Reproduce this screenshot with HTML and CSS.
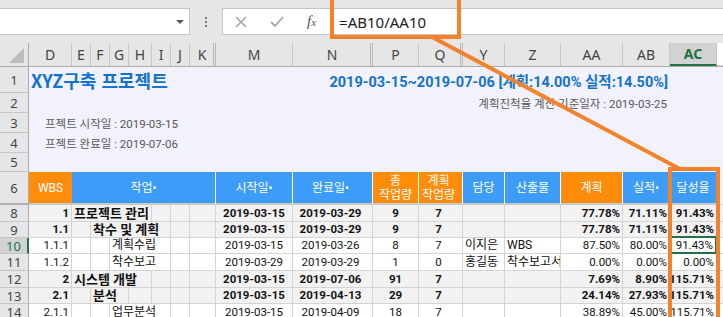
FILE: index.html
```html
<!DOCTYPE html>
<html lang="ko">
<head>
    <meta charset="UTF-8">
    <title>XYZ구축 프로젝트</title>
    <link rel="stylesheet" href="styles.css">
</head>
<body>
    <!-- formula bar -->
    <div class="fbar">
        <div class="namebox"><span class="caret"></span></div>
        <div class="grip"><i></i><i></i><i></i></div>
        <div class="formula">
            <svg class="fbtn" width="14" height="14" viewBox="0 0 14 14"><path d="M2 2 L12 12 M12 2 L2 12" stroke="#a6a6a6" stroke-width="1.6" fill="none"/></svg>
            <svg class="fbtn" width="16" height="14" viewBox="0 0 16 14"><path d="M2 7 L6 11 L14 2" stroke="#a6a6a6" stroke-width="1.8" fill="none"/></svg>
            <span class="fx">f<sub>x</sub></span>
            <span class="ftext">=AB10/AA10</span>
        </div>
    </div>

    <div class="sheet">
        <div class="row colhdr">
            <div class="corner"><span class="tri"></span></div>
            <div>D</div><div>E</div><div>F</div><div>G</div><div>H</div><div>I</div><div>J</div>
            <div class="hid">K</div><div>M</div><div class="hid">N</div><div>P</div><div class="hid">Q</div>
            <div>Y</div><div>Z</div><div>AA</div><div>AB</div><div class="sel">AC</div><div class="rest"></div>
        </div>

        <div class="row band r1">
            <div class="rh">1</div>
            <div class="band-cell">
                <span class="title">XYZ구축 프로젝트</span>
                <span class="period">2019-03-15~2019-07-06 [계획:14.00% 실적:14.50%]</span>
            </div>
        </div>
        <div class="row band r2">
            <div class="rh">2</div>
            <div class="band-cell right"><span class="note">계획진척율 계산 기준일자 : 2019-03-25</span></div>
        </div>
        <div class="row band r3">
            <div class="rh">3</div>
            <div class="band-cell"><span class="info">프젝트 시작일 : 2019-03-15</span></div>
        </div>
        <div class="row band r4">
            <div class="rh">4</div>
            <div class="band-cell"><span class="info">프젝트 완료일 : 2019-07-06</span></div>
        </div>
        <div class="row band r5">
            <div class="rh">5</div>
            <div class="band-cell"></div>
        </div>

        <div class="row thead">
            <div class="rh">6</div>
            <div class="th or wbs">WBS</div>
            <div class="th bl task">작업•</div>
            <div class="th bl">시작일•</div>
            <div class="th bl pad-n">완료일•</div>
            <div class="th or">총<br>작업량</div>
            <div class="th or pad-q">계획<br>작업량</div>
            <div class="th bl">담당</div>
            <div class="th bl">산출물</div>
            <div class="th or">계획</div>
            <div class="th bl">실적•</div>
            <div class="th bl">달성율</div>
            <div class="th rest"></div>
        </div>

        <div class="row data sum r8">
            <div class="rh">8</div>
            <div class="c num">1</div>
            <div class="c txt s4">프로젝트 관리</div>
            <div class="c"></div><div class="c"></div><div class="c"></div>
            <div class="c mid">2019-03-15</div><div class="c mid pad-n">2019-03-29</div>
            <div class="c mid">9</div><div class="c mid pad-q">7</div>
            <div class="c"></div><div class="c"></div>
            <div class="c num">77.78%</div><div class="c num">71.11%</div><div class="c num">91.43%</div>
            <div class="rest"></div>
        </div>
        <div class="row data sum r9">
            <div class="rh">9</div>
            <div class="c num">1.1</div>
            <div class="c"></div>
            <div class="c txt s4">착수 및 계획</div>
            <div class="c"></div><div class="c"></div>
            <div class="c mid">2019-03-15</div><div class="c mid pad-n">2019-03-29</div>
            <div class="c mid">9</div><div class="c mid pad-q">7</div>
            <div class="c"></div><div class="c"></div>
            <div class="c num">77.78%</div><div class="c num">71.11%</div><div class="c num active-top">91.43%</div>
            <div class="rest"></div>
        </div>
        <div class="row data r10">
            <div class="rh on">10</div>
            <div class="c num">1.1.1</div>
            <div class="c"></div><div class="c"></div>
            <div class="c txt s3">계획수립</div>
            <div class="c"></div><div class="c"></div>
            <div class="c mid">2019-03-15</div><div class="c mid pad-n">2019-03-26</div>
            <div class="c mid">8</div><div class="c mid pad-q">7</div>
            <div class="c txt">이지은</div><div class="c txt">WBS</div>
            <div class="c num">87.50%</div><div class="c num">80.00%</div><div class="c num active">91.43%</div>
            <div class="rest"></div>
        </div>
        <div class="row data r11">
            <div class="rh">11</div>
            <div class="c num">1.1.2</div>
            <div class="c"></div><div class="c"></div>
            <div class="c txt s3">착수보고</div>
            <div class="c"></div><div class="c"></div>
            <div class="c mid">2019-03-29</div><div class="c mid pad-n">2019-03-29</div>
            <div class="c mid">1</div><div class="c mid pad-q">0</div>
            <div class="c txt">홍길동</div><div class="c txt clip">착수보고서</div>
            <div class="c num">0.00%</div><div class="c num">0.00%</div><div class="c num">0.00%</div>
            <div class="rest"></div>
        </div>
        <div class="row data sum r12">
            <div class="rh">12</div>
            <div class="c num">2</div>
            <div class="c txt s4">시스템 개발</div>
            <div class="c"></div><div class="c"></div><div class="c"></div>
            <div class="c mid">2019-03-15</div><div class="c mid pad-n">2019-07-06</div>
            <div class="c mid">91</div><div class="c mid pad-q">7</div>
            <div class="c"></div><div class="c"></div>
            <div class="c num">7.69%</div><div class="c num">8.90%</div><div class="c num">115.71%</div>
            <div class="rest"></div>
        </div>
        <div class="row data sum r13">
            <div class="rh">13</div>
            <div class="c num">2.1</div>
            <div class="c"></div>
            <div class="c txt s2">분석</div>
            <div class="c"></div><div class="c"></div><div class="c"></div><div class="c"></div>
            <div class="c mid">2019-03-15</div><div class="c mid pad-n">2019-04-13</div>
            <div class="c mid">29</div><div class="c mid pad-q">7</div>
            <div class="c"></div><div class="c"></div>
            <div class="c num">24.14%</div><div class="c num">27.93%</div><div class="c num">115.71%</div>
            <div class="rest"></div>
        </div>
        <div class="row data r14">
            <div class="rh">14</div>
            <div class="c num">2.1.1</div>
            <div class="c"></div><div class="c"></div>
            <div class="c txt s3">업무분석</div>
            <div class="c"></div><div class="c"></div>
            <div class="c mid">2019-03-15</div><div class="c mid pad-n">2019-04-09</div>
            <div class="c mid">18</div><div class="c mid pad-q">7</div>
            <div class="c"></div><div class="c"></div>
            <div class="c num">38.89%</div><div class="c num">45.00%</div><div class="c num">115.71%</div>
            <div class="rest"></div>
        </div>
    </div>

    <!-- callout drawn over the sheet -->
    <svg class="callout" width="723" height="317" viewBox="0 0 723 317">
        <rect x="332" y="-8" width="127" height="45" fill="none" stroke="#f5822a" stroke-width="4"/>
        <line x1="432" y1="37" x2="680" y2="169" stroke="#f5822a" stroke-width="4"/>
        <rect x="670" y="169" width="48" height="160" fill="none" stroke="#f5822a" stroke-width="4"/>
    </svg>
</body>
</html>
```

FILE: styles.css
```css
* {
    margin: 0;
    padding: 0;
    box-sizing: border-box;
}

body {
    width: 723px;
    height: 317px;
    overflow: hidden;
    position: relative;
    background-color: #e6e6e6;
    font-family: Roboto, "Noto Sans CJK KR", sans-serif;
    color: #222;
}

/* formula bar */
.fbar {
    height: 43px;
    display: flex;
    align-items: center;
    background-color: #e6e6e6;
}

.namebox {
    width: 190px;
    height: 27px;
    background-color: #fff;
    border: 1px solid #c6c6c6;
    border-left: none;
    position: relative;
}

.caret {
    position: absolute;
    right: 5px;
    top: 11px;
    border-left: 4px solid transparent;
    border-right: 4px solid transparent;
    border-top: 4px solid #555;
}

.grip {
    width: 32px;
    display: flex;
    flex-direction: column;
    align-items: center;
    gap: 2px;
}

.grip i {
    width: 2px;
    height: 2px;
    background-color: #777;
}

.formula {
    flex: 1;
    height: 27px;
    background-color: #fff;
    border: 1px solid #c6c6c6;
    border-right: none;
    display: flex;
    align-items: center;
    padding-left: 11px;
}

.fbtn {
    margin-right: 21px;
}

.fx {
    font-family: "Liberation Serif", serif;
    font-style: italic;
    font-size: 15px;
    color: #555;
    margin-left: 1px;
}

.fx sub {
    font-size: 11px;
    vertical-align: baseline;
}

.ftext {
    margin-left: 23px;
    font-family: "Noto Sans", sans-serif;
    font-size: 15px;
    color: #222;
}

/* sheet */
.row {
    display: grid;
    grid-template-columns: 29px 43px 19px 19px 19px 23px 19px 19px 26px 77px 80px 46px 44px 42px 56px 62px 47px 47px 6px;
}

.colhdr {
    height: 24px;
    background-color: #e6e6e6;
    border-bottom: 1px solid #ababab;
}

.colhdr div {
    display: flex;
    align-items: center;
    justify-content: center;
    font-family: "Noto Sans", sans-serif;
    font-size: 14px;
    color: #444;
    border-right: 1px solid #c6c6c6;
}

.colhdr .hid {
    border-right: 3px double #b8b8b8;
    padding-left: 1px;
}

.colhdr .corner {
    position: relative;
    border-right: 1px solid #ababab;
}

.corner .tri {
    position: absolute;
    right: 4px;
    bottom: 3px;
    border-left: 15px solid transparent;
    border-bottom: 15px solid #bdbdbd;
}

.colhdr .sel {
    background-color: #d2d2d2;
    color: #217346;
    font-weight: bold;
    border-bottom: 2px solid #217346;
}

.colhdr .rest {
    border-right: none;
}

.rh {
    display: flex;
    align-items: center;
    justify-content: center;
    background-color: #e6e6e6;
    border-right: 1px solid #ababab;
    border-bottom: 1px solid #c6c6c6;
    font-family: "Noto Sans", sans-serif;
    font-size: 13px;
    color: #444;
    line-height: 12px;
}

.rh.on {
    background-color: #d2d2d2;
    color: #217346;
    border-right: 2px solid #217346;
}

.band-cell {
    grid-column: 2 / -1;
    background-color: #f2f2fc;
    display: flex;
    align-items: center;
    white-space: nowrap;
}

.r1 { height: 26px; }
.r2, .r3, .r4 { height: 20px; }
.r5 { height: 19px; }

.r1 .band-cell {
    justify-content: space-between;
    padding-left: 2px;
    padding-right: 55px;
}

.title {
    font-family: "Noto Sans CJK KR", sans-serif;
    font-size: 18px;
    font-weight: bold;
    color: #1273cc;
}

.period {
    font-size: 14.5px;
    font-weight: bold;
    color: #1273cc;
}

.band-cell.right {
    justify-content: flex-end;
    padding-right: 56px;
}

.note, .info {
    font-size: 11.5px;
    color: #595959;
}

.info {
    padding-left: 16px;
}

/* table header */
.thead {
    height: 33px;
}

.thead .rh {
    border-bottom: 2px solid #b0b0b0;
}

.th {
    display: flex;
    align-items: center;
    justify-content: center;
    text-align: center;
    color: #fff;
    font-size: 12px;
    line-height: 14px;
    border-right: 1px solid #fff;
    border-bottom: 2px solid #c8c8c8;
}

.th.or { background-color: #ff8c0a; }
.th.bl { background-color: #3d9cf7; }
.th.wbs { border-right: none; }
.th.task { grid-column: span 7; }
.th.rest { background-color: #f2f2fc; border-right: none; }

.pad-n { padding-right: 4px; }
.pad-q { padding-right: 4px; }

/* data rows */
.data { height: 16px; }
.r8, .r11, .r12, .r14 { height: 17px; }

.c {
    font-size: 11.5px;
    line-height: 13px;
    display: flex;
    align-items: center;
    white-space: nowrap;
    overflow: hidden;
    background-color: #fff;
    border-right: 1px solid #d4d4d4;
    border-bottom: 1px solid #d4d4d4;
    color: #111;
}

.sum .c {
    background-color: #f2f2f2;
    font-weight: bold;
}

.c.num {
    justify-content: flex-end;
    padding-right: 2px;
}

.c.mid {
    justify-content: center;
}

.c.txt {
    padding-left: 2px;
    font-size: 12px;
}

.sum .c.txt {
    font-size: 13px;
}

.s2 { grid-column: span 2; }
.s3 { grid-column: span 3; }
.s4 { grid-column: span 4; }

.c.active-top {
    border-bottom: 2px solid #217346;
}

.c.active {
    border-bottom: 2px solid #217346;
    border-right: 2px solid #217346;
}

.rest {
    background-color: #fff;
    border-bottom: 1px solid #d4d4d4;
}

.sum .rest {
    background-color: #f2f2f2;
}

.callout {
    position: absolute;
    left: 0;
    top: 0;
    pointer-events: none;
}
```
